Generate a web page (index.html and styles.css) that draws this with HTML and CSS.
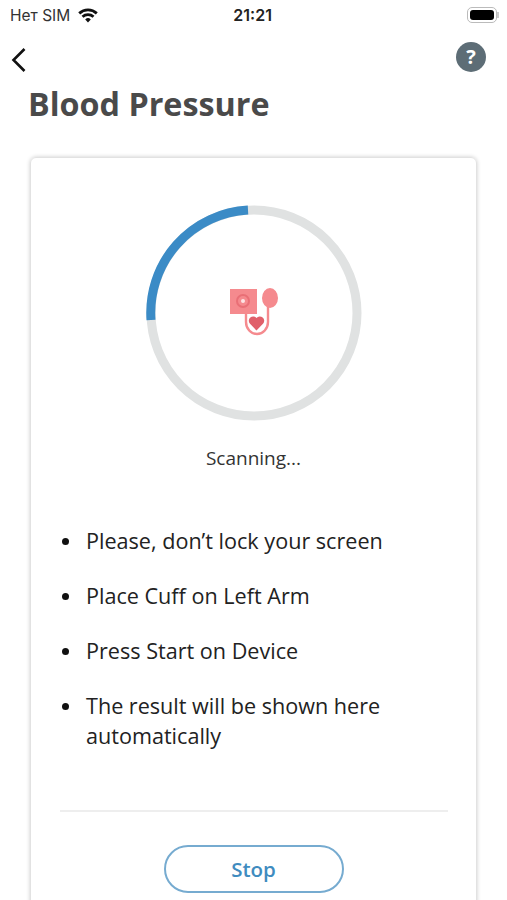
FILE: index.html
```html
<!DOCTYPE html>
<html lang="en">

<head>
    <meta charset="UTF-8">
    <meta name="viewport" content="width=device-width, initial-scale=1.0">
    <title>Blood Pressure</title>
    <link rel="stylesheet" href="styles.css">
</head>

<body>

    <div class="statusBar">
        <div class="carrier">
            <span>Нет SIM</span>
            <svg class="wifi" width="20" height="15" viewBox="0 0 20 15">
                <path d="M1.2 5.4 A13 13 0 0 1 18.8 5.4" fill="none" stroke="#111" stroke-width="2.8" />
                <path d="M4.5 8.8 A8.2 8.2 0 0 1 15.5 8.8" fill="none" stroke="#111" stroke-width="2.8" />
                <path d="M7.2 11.4 A4 4 0 0 1 12.8 11.4 L10 14.6 Z" fill="#111" />
            </svg>
        </div>
        <div class="clock">21:21</div>
        <div class="battery"><span class="batteryFill"></span></div>
    </div>

    <div class="navBar">
        <svg class="back" width="16" height="26" viewBox="0 0 16 26">
            <path d="M13.5 2 L2.5 13 L13.5 24" fill="none" stroke="#111" stroke-width="2.6" />
        </svg>
        <div class="help">?</div>
    </div>

    <h1 class="title">Blood Pressure</h1>

    <div class="card">
        <div class="progress">
            <svg width="218" height="218" viewBox="0 0 218 218">
                <circle cx="109" cy="109" r="103" fill="none" stroke="#e0e2e2" stroke-width="9" />
                <path d="M6 116 A103 103 0 0 1 103 6" fill="none" stroke="#3b8bc6" stroke-width="9" />
            </svg>
            <svg class="cuff" width="50" height="50" viewBox="0 0 50 50">
                <rect x="0" y="2" width="27" height="25" fill="#f58a8e" />
                <circle cx="13" cy="14" r="6" fill="none" stroke="#e96f76" stroke-width="2" />
                <circle cx="13" cy="14" r="2" fill="#fde4e4" />
                <ellipse cx="40" cy="11" rx="8" ry="10" fill="#f58a8e" />
                <path d="M16 27 V35 A11 12 0 0 0 38 35 V20" fill="none" stroke="#f58a8e" stroke-width="2.4" />
                <path d="M26.5 43.5 L19.8 36.6 A4 4 0 0 1 26.5 31 A4 4 0 0 1 33.2 36.6 Z" fill="#e0606a" />
            </svg>
        </div>
        <p class="status">Scanning...</p>

        <ul class="steps">
            <li>Please, don’t lock your screen</li>
            <li>Place Cuff on Left Arm</li>
            <li>Press Start on Device</li>
            <li>The result will be shown here automatically</li>
        </ul>

        <div class="divider"></div>

        <button class="stopBtn">Stop</button>
    </div>

</body>

</html>
```
FILE: styles.css
```css
* {
    margin: 0;
    padding: 0;
    box-sizing: border-box;
}

html,
body {
    height: 900px;
    overflow: hidden;
}

body {
    background: #fff;
    font-family: 'Open Sans', sans-serif;
    color: #222;
}

/* STATUS BAR ================================= */
.statusBar {
    display: flex;
    justify-content: space-between;
    align-items: center;
    height: 30px;
    padding: 0 10px;
    font-family: 'Inter', 'Liberation Sans', sans-serif;
}

.carrier {
    display: flex;
    align-items: center;
    gap: 8px;
    font-size: 15.5px;
    color: #333;
}

.clock {
    flex: 1;
    text-align: center;
    font-size: 16px;
    font-weight: 600;
    color: #222;
    margin-right: 60px;
}

.battery {
    position: relative;
    width: 30px;
    height: 16px;
    padding: 2px;
    border: 1px solid #bbb;
    border-radius: 5px;
}

.battery:after {
    content: '';
    position: absolute;
    right: -3px;
    top: 4px;
    width: 2px;
    height: 6px;
    background: #ccc;
}

.batteryFill {
    display: block;
    height: 100%;
    background: #000;
    border-radius: 3px;
}

/* NAV ======================================== */
.navBar {
    display: flex;
    justify-content: space-between;
    align-items: center;
    height: 30px;
    margin-top: 12px;
    padding: 0 21px 0 11px;
}

.back {
    margin-top: 5px;
}

.help {
    width: 30px;
    height: 30px;
    border-radius: 50%;
    background: #5d6d76;
    color: #fff;
    font-size: 20px;
    font-weight: 700;
    line-height: 30px;
    text-align: center;
}

.title {
    font-size: 32.3px;
    font-weight: 700;
    line-height: 42px;
    color: #4a4a4a;
    margin: 10px 0 33px 28px;
}

/* CARD ======================================= */
.card {
    display: flex;
    flex-direction: column;
    align-items: center;
    width: 447px;
    height: 760px;
    margin-left: 30px;
    padding: 46px 29px 0;
    border: 1px solid #e2e2e2;
    border-radius: 6px;
    box-shadow: 0 0 4px rgba(0, 0, 0, .2);
}

.progress {
    position: relative;
    width: 218px;
    height: 218px;
}

.cuff {
    position: absolute;
    left: 85px;
    top: 83px;
}

.status {
    margin-top: 23px;
    font-size: 19px;
    line-height: 26px;
    color: #333;
}

.steps {
    align-self: stretch;
    list-style: none;
    margin-top: 55px;
    padding-left: 2px;
    font-size: 21.6px;
    line-height: 30px;
    color: #222;
}

.steps li {
    display: flex;
    gap: 17px;
    margin-bottom: 25px;
}

.steps li:before {
    content: '';
    flex: none;
    width: 7px;
    height: 7px;
    margin-top: 12px;
    border-radius: 50%;
    background: #111;
}

.divider {
    align-self: stretch;
    height: 2px;
    background: #eee;
    margin: 34px -1px 0 0;
}

.stopBtn {
    width: 180px;
    height: 48px;
    margin-top: 33px;
    border: 2px solid #76abd0;
    border-radius: 25px;
    background: #fff;
    color: #3f8cc0;
    font-family: 'Open Sans', sans-serif;
    font-size: 20.5px;
    font-weight: 600;
}
```
